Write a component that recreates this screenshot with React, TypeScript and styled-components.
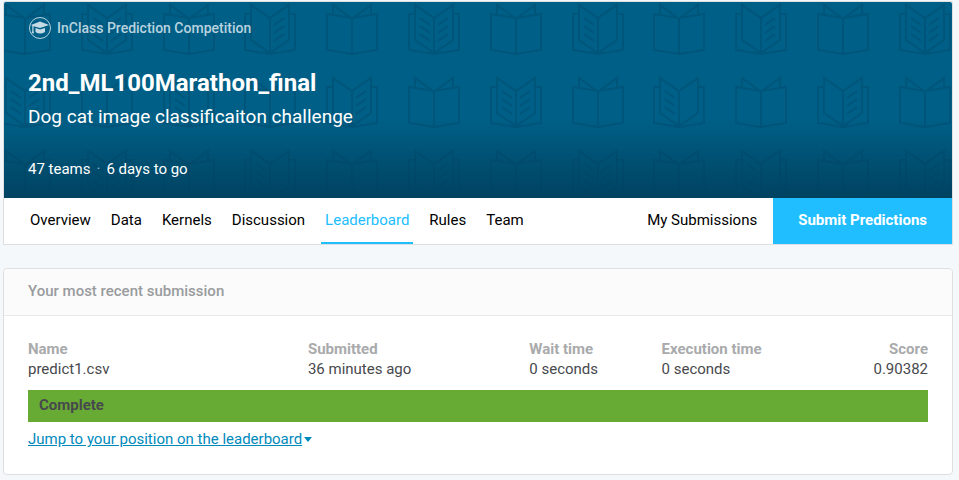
import React from "react";
import styled, { createGlobalStyle } from "styled-components";

const GlobalStyle = createGlobalStyle`
  * { box-sizing: border-box; }
  body {
    margin: 0;
    background: #f5f8fa;
    color: #47494d;
    font-family: Roboto, "Liberation Sans", sans-serif;
    font-size: 15px;
    line-height: 20px;
  }
`;

const Page = styled.main`
  display: flex;
  flex-direction: column;
  gap: 23px;
  padding: 1px 6px 5px 3px;
`;

const Competition = styled.section`
  border: 1px solid #dedfe0;
  border-radius: 2px 2px 0 0;
  background: #fff;
`;

const Banner = styled.header`
  position: relative;
  overflow: hidden;
  border-radius: 2px 2px 0 0;
  background: #005f86;
  color: #fff;
`;

const Backdrop = styled.svg`
  position: absolute;
  top: 0;
  left: 0;
  fill: none;
  stroke: #00557b;
  stroke-width: 2;
`;

const BannerContent = styled.div`
  position: relative;
  padding: 14px 24px 19px;
  background: linear-gradient(rgba(0, 65, 95, 0) 60%, rgba(0, 65, 95, 0.95) 100%);
`;

const Category = styled.div`
  display: flex;
  align-items: center;
  gap: 5px;
  color: #b8d3df;
  font-size: 14px;
  line-height: 24px;
  font-weight: 500;
`;

const Title = styled.h1`
  margin: 27px 0 0;
  font-size: 24px;
  line-height: 32px;
  font-weight: 700;
`;

const Subtitle = styled.p`
  margin: 4px 0 0;
  font-size: 19px;
  line-height: 28px;
`;

const Stats = styled.p`
  display: flex;
  gap: 6px;
  margin: 28px 0 0;
`;

const Dot = styled.span`
  color: #9dbccb;
`;

const Nav = styled.nav`
  display: flex;
  align-items: stretch;
  padding-left: 22px;
  line-height: 44px;
`;

const Tab = styled.a<{ $active?: boolean }>`
  padding: 0 4px;
  margin-right: 12px;
  border-bottom: 2px solid ${(p) => (p.$active ? "#20beff" : "transparent")};
  color: ${(p) => (p.$active ? "#20beff" : "#000")};
  text-decoration: none;
`;

const MySubmissions = styled(Tab)`
  margin-left: auto;
`;

const SubmitButton = styled.button`
  border: 0;
  padding: 0 25px 2px;
  background: #20beff;
  color: #fff;
  font: inherit;
  font-weight: 700;
`;

const Card = styled.section`
  border: 1px solid #dedfe0;
  border-radius: 4px;
  background: #fff;
`;

const CardTitle = styled.h2`
  margin: 0;
  padding: 12px 24px 14px;
  border-bottom: 1px solid #e8e9ea;
  border-radius: 4px 4px 0 0;
  background: #fbfbfb;
  color: #999b9e;
  font-size: 15px;
  line-height: 20px;
  font-weight: 500;
`;

const CardBody = styled.div`
  padding: 23px 24px 25px;
`;

const Table = styled.table`
  width: 100%;
  border-collapse: collapse;
  table-layout: fixed;
`;

const HeadCell = styled.th<{ $width?: string; $end?: boolean }>`
  width: ${(p) => p.$width ?? "auto"};
  padding: 0;
  color: #a9aaac;
  font-weight: 700;
  text-align: ${(p) => (p.$end ? "right" : "left")};
`;

const Cell = styled.td<{ $end?: boolean }>`
  padding: 0;
  text-align: ${(p) => (p.$end ? "right" : "left")};
`;

const Status = styled.div`
  margin: 11px 0 7px;
  padding: 5px 11px 7px;
  background: #68ab34;
  font-weight: 700;
`;

const JumpLink = styled.a`
  display: inline-flex;
  align-items: center;
  color: #008abc;
  text-decoration: none;
`;

const JumpText = styled.span`
  padding-right: 2px;
  text-decoration: underline;
`;

type BookKind = "plain" | "both" | "left" | "right";

const FILLED: BookKind[][] = [
  ["both", "right", "both", "left", "right", "both"],
  ["both", "left", "right", "both", "left", "right"],
  ["both", "left", "right", "both", "left", "right"],
];

const LEFT_LINES = "M-14 15l10 7M-14 23l10 7M-14 31l10 7";
const RIGHT_LINES = "M14 15l-10 7M14 23l-10 7M14 31l-10 7";

function Book({ kind, x, y }: { kind: BookKind; x: number; y: number }) {
  return (
    <g transform={`translate(${x} ${y})`}>
      {kind === "plain" ? (
        <path d="M-25 11L0 15L25 11V47L0 51L-25 47ZM0 15V51M-19 11V2L-1 15M19 11V2L1 15" />
      ) : (
        <path d="M-19 11H-25V47L0 51L25 47V11H19M0 15L19 2V37L0 50L-19 37V2ZM0 15V50" />
      )}
      {(kind === "left" || kind === "both") && <path d={LEFT_LINES} />}
      {(kind === "right" || kind === "both") && <path d={RIGHT_LINES} />}
    </g>
  );
}

function Books() {
  const books: React.ReactNode[] = [];
  for (let row = 0; row < 3; row++) {
    for (let col = 0; col < 36; col++) {
      const isPlain = (row + col) % 2 === 0;
      const kind = isPlain ? "plain" : FILLED[row][Math.floor(col / 2) % 6];
      books.push(
        <Book key={`${row}-${col}`} kind={kind} x={Math.round(21 + col * 81.8)} y={1 + row * 73} />
      );
    }
  }
  return (
    <Backdrop width="2940" height="196" aria-hidden="true">
      {books}
    </Backdrop>
  );
}

function GraduationBadge() {
  return (
    <svg width="24" height="24" viewBox="0 0 24 24" aria-hidden="true">
      <circle cx="12" cy="12" r="10.5" fill="none" stroke="#b8d3df" />
      <path
        fill="#c4dae4"
        d="M12 5.500L21 9L12 12L5.500 10.200V15L6 17.500L3.500 17L4.300 15V9.800L3 9ZM7.500 12L12 13.500L17 12V16Q12 19 7.500 16Z"
      />
    </svg>
  );
}

const TABS = ["Overview", "Data", "Kernels", "Discussion", "Leaderboard", "Rules", "Team"];

export default function App() {
  return (
    <>
      <GlobalStyle />
      <Page>
        <Competition>
          <Banner>
            <Books />
            <BannerContent>
              <Category>
                <GraduationBadge />
                InClass Prediction Competition
              </Category>
              <Title>2nd_ML100Marathon_final</Title>
              <Subtitle>Dog cat image classificaiton challenge</Subtitle>
              <Stats>
                <span>47 teams</span>
                <Dot>·</Dot>
                <span>6 days to go</span>
              </Stats>
            </BannerContent>
          </Banner>
          <Nav>
            {TABS.map((tab) => (
              <Tab key={tab} href="#" $active={tab === "Leaderboard"}>
                {tab}
              </Tab>
            ))}
            <MySubmissions href="#">My Submissions</MySubmissions>
            <SubmitButton type="button">Submit Predictions</SubmitButton>
          </Nav>
        </Competition>
        <Card>
          <CardTitle>Your most recent submission</CardTitle>
          <CardBody>
            <Table>
              <thead>
                <tr>
                  <HeadCell $width="31.1%">Name</HeadCell>
                  <HeadCell $width="24.6%">Submitted</HeadCell>
                  <HeadCell $width="14.7%">Wait time</HeadCell>
                  <HeadCell>Execution time</HeadCell>
                  <HeadCell $end>Score</HeadCell>
                </tr>
              </thead>
              <tbody>
                <tr>
                  <Cell>predict1.csv</Cell>
                  <Cell>36 minutes ago</Cell>
                  <Cell>0 seconds</Cell>
                  <Cell>0 seconds</Cell>
                  <Cell $end>0.90382</Cell>
                </tr>
              </tbody>
            </Table>
            <Status>Complete</Status>
            <JumpLink href="#">
              <JumpText>Jump to your position on the leaderboard</JumpText>
              <svg width="8" height="5" viewBox="0 0 8 5" aria-hidden="true">
                <path d="M0 0H8L4 5Z" fill="#008abc" />
              </svg>
            </JumpLink>
          </CardBody>
        </Card>
      </Page>
    </>
  );
}
